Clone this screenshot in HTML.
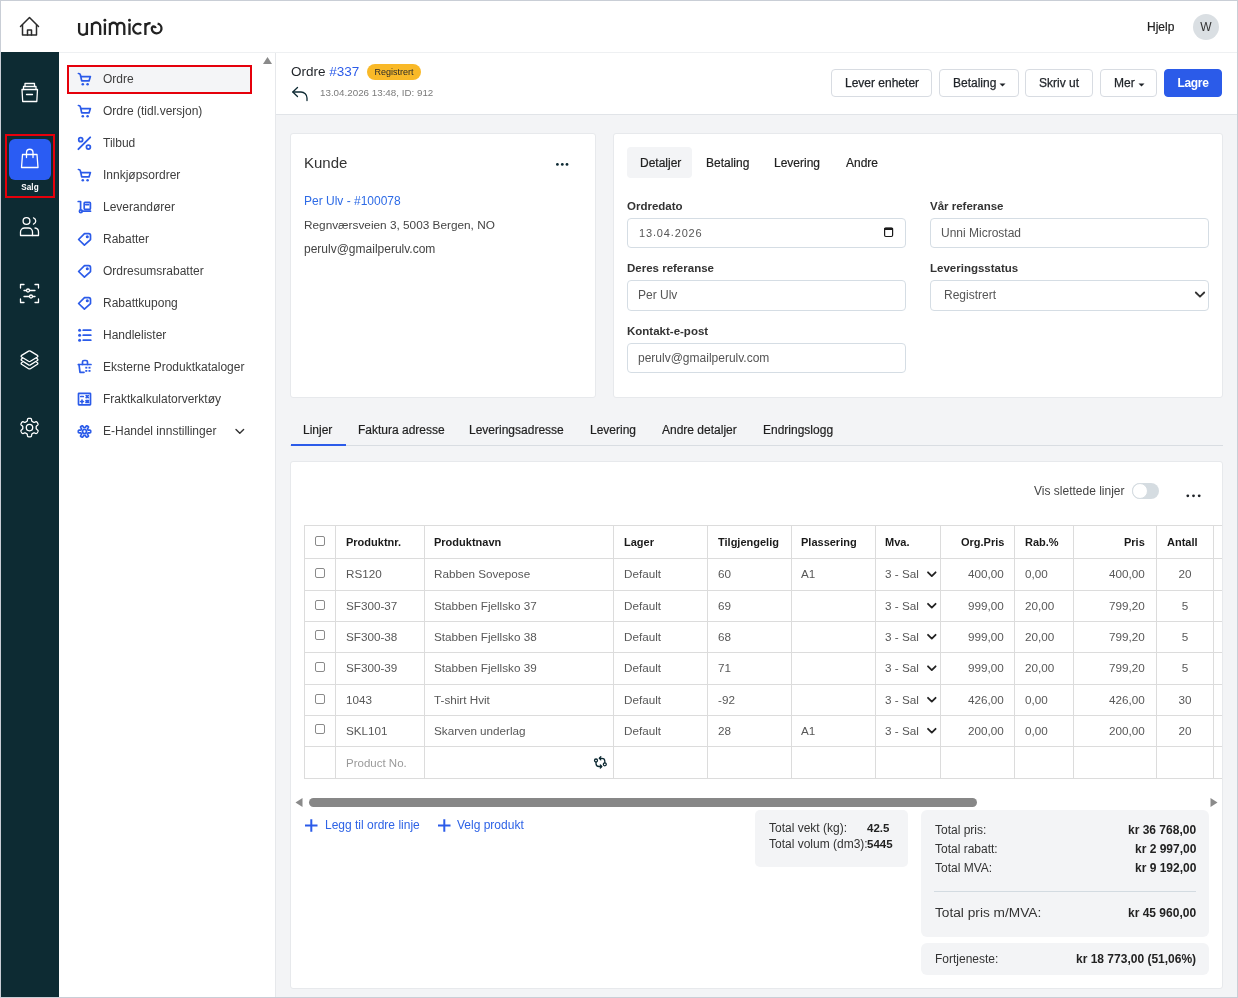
<!DOCTYPE html>
<html><head><meta charset="utf-8">
<style>
*{box-sizing:border-box;margin:0;padding:0}
html,body{width:1238px;height:998px;overflow:hidden;background:#fff}
body{font-family:"Liberation Sans",sans-serif;font-size:12px;color:#222;position:relative}
.a{position:absolute}
.t{position:absolute;line-height:1;white-space:nowrap;will-change:transform}
#frame{position:absolute;left:0;top:0;width:1238px;height:998px;border:1px solid #c9ced6;pointer-events:none;z-index:50}
.btn{position:absolute;top:69px;height:28px;border:1px solid #d8dce2;border-radius:4px;background:#fff}
.card{position:absolute;background:#fff;border:1px solid #e7e9ec;border-radius:3px}
.inp{position:absolute;height:30px;border:1px solid #d5dde4;border-radius:4px;background:#fff}
.cb{position:absolute;width:10px;height:10px;border:1px solid #8a8a8a;border-radius:2px;background:#fff}
svg{position:absolute;left:0;top:0;overflow:visible}
</style></head><body>

<div class="a" style="left:0;top:0;width:1238px;height:53px;background:#fff;border-bottom:1px solid #eceef1"></div>
<div class="a" style="left:0;top:52px;width:59px;height:946px;background:#0d2b33"></div>
<div class="a" style="left:59px;top:52px;width:217px;height:946px;background:#fff;border-right:1px solid #e6e8eb"></div>
<div class="a" style="left:276px;top:52px;width:962px;height:946px;background:#f3f4f6"></div>
<div class="a" style="left:276px;top:52px;width:962px;height:63px;background:#fff;border-bottom:1px solid #e1e4e8"></div>
<div class="a" style="left:59px;top:52px;width:1179px;height:1px;background:#eef0f2"></div>
<div class="t" style="left:1147px;top:21px;font-size:12px;color:#222;font-weight:400;-webkit-text-stroke:0.2px #222">Hjelp</div>
<div class="a" style="left:1193px;top:14px;width:26px;height:26px;border-radius:50%;background:#dadfe3"></div>
<div class="t" style="left:1193.0px;width:26px;text-align:center;top:21px;font-size:12px;color:#333;font-weight:400;">W</div>
<div class="a" style="left:9px;top:139px;width:42px;height:41px;border-radius:6px;background:#2a5cf3"></div>
<div class="t" style="left:10.0px;width:40px;text-align:center;top:184px;font-size:8.2px;color:#fff;font-weight:700;">Salg</div>
<div class="a" style="left:5px;top:134px;width:50px;height:64px;border:2px solid #e5000b"></div>
<div class="a" style="left:67px;top:65px;width:185px;height:29px;background:#f4f5f7;border:2px solid #e5000b"></div>
<div class="t" style="left:103px;top:73px;font-size:12px;color:#3d3d3d;font-weight:400;">Ordre</div>
<div class="t" style="left:103px;top:105px;font-size:12px;color:#3d3d3d;font-weight:400;">Ordre (tidl.versjon)</div>
<div class="t" style="left:103px;top:137px;font-size:12px;color:#3d3d3d;font-weight:400;">Tilbud</div>
<div class="t" style="left:103px;top:169px;font-size:12px;color:#3d3d3d;font-weight:400;">Innkjøpsordrer</div>
<div class="t" style="left:103px;top:201px;font-size:12px;color:#3d3d3d;font-weight:400;">Leverandører</div>
<div class="t" style="left:103px;top:233px;font-size:12px;color:#3d3d3d;font-weight:400;">Rabatter</div>
<div class="t" style="left:103px;top:265px;font-size:12px;color:#3d3d3d;font-weight:400;">Ordresumsrabatter</div>
<div class="t" style="left:103px;top:297px;font-size:12px;color:#3d3d3d;font-weight:400;">Rabattkupong</div>
<div class="t" style="left:103px;top:329px;font-size:12px;color:#3d3d3d;font-weight:400;">Handlelister</div>
<div class="t" style="left:103px;top:361px;font-size:12px;color:#3d3d3d;font-weight:400;">Eksterne Produktkataloger</div>
<div class="t" style="left:103px;top:393px;font-size:12px;color:#3d3d3d;font-weight:400;">Fraktkalkulatorverktøy</div>
<div class="t" style="left:103px;top:425px;font-size:12px;color:#3d3d3d;font-weight:400;">E-Handel innstillinger</div>
<div class="t" style="left:291px;top:65px;font-size:13.5px;color:#1f2328">Ordre <span style="color:#2b5be9">#337</span></div>
<div class="a" style="left:367px;top:64px;width:54px;height:16px;border-radius:8px;background:#f9b928"></div>
<div class="t" style="left:367.0px;width:54px;text-align:center;top:68px;font-size:9px;color:#2a2a2a;font-weight:400;">Registrert</div>
<div class="t" style="left:320px;top:88px;font-size:9.8px;color:#7a7a7a;font-weight:400;">13.04.2026 13:48, ID: 912</div>
<div class="btn" style="left:831px;width:101px"></div>
<div class="btn" style="left:939px;width:80px"></div>
<div class="btn" style="left:1025px;width:68px"></div>
<div class="btn" style="left:1100px;width:57px"></div>
<div class="t" style="left:845px;top:77px;font-size:12px;color:#1f2328;font-weight:400;-webkit-text-stroke:0.25px #1f2328">Lever enheter</div>
<div class="t" style="left:953px;top:77px;font-size:12px;color:#1f2328;font-weight:400;-webkit-text-stroke:0.25px #1f2328">Betaling</div>
<div class="t" style="left:1039px;top:77px;font-size:12px;color:#1f2328;font-weight:400;-webkit-text-stroke:0.25px #1f2328">Skriv ut</div>
<div class="t" style="left:1114px;top:77px;font-size:12px;color:#1f2328;font-weight:400;-webkit-text-stroke:0.25px #1f2328">Mer</div>
<div class="btn" style="left:1164px;width:58px;background:#2b5be9;border-color:#2b5be9"></div>
<div class="t" style="left:1164.0px;width:58px;text-align:center;top:77px;font-size:12px;color:#fff;font-weight:700;letter-spacing:-0.3px">Lagre</div>
<div class="card" style="left:290px;top:133px;width:306px;height:265px"></div>
<div class="card" style="left:613px;top:133px;width:610px;height:265px"></div>
<div class="card" style="left:290px;top:461px;width:933px;height:528px"></div>
<div class="t" style="left:304px;top:155px;font-size:15px;color:#333;font-weight:400;">Kunde</div>
<div class="t" style="left:304px;top:195px;font-size:12px;color:#2e6be6;font-weight:400;">Per Ulv - #100078</div>
<div class="t" style="left:304px;top:220px;font-size:11.8px;color:#444;font-weight:400;">Regnværsveien 3, 5003 Bergen, NO</div>
<div class="t" style="left:304px;top:243px;font-size:12px;color:#444;font-weight:400;">perulv@gmailperulv.com</div>
<div class="a" style="left:627px;top:147px;width:65px;height:31px;border-radius:4px;background:#f3f4f6"></div>
<div class="t" style="left:640px;top:157px;font-size:12px;color:#222;font-weight:400;-webkit-text-stroke:0.2px #222">Detaljer</div>
<div class="t" style="left:706px;top:157px;font-size:12px;color:#222;font-weight:400;-webkit-text-stroke:0.2px #222">Betaling</div>
<div class="t" style="left:774px;top:157px;font-size:12px;color:#222;font-weight:400;-webkit-text-stroke:0.2px #222">Levering</div>
<div class="t" style="left:846px;top:157px;font-size:12px;color:#222;font-weight:400;-webkit-text-stroke:0.2px #222">Andre</div>
<div class="t" style="left:627px;top:201px;font-size:11.5px;color:#333;font-weight:700;">Ordredato</div>
<div class="t" style="left:627px;top:263px;font-size:11.5px;color:#333;font-weight:700;">Deres referanse</div>
<div class="t" style="left:627px;top:326px;font-size:11.5px;color:#333;font-weight:700;">Kontakt-e-post</div>
<div class="t" style="left:930px;top:201px;font-size:11.5px;color:#333;font-weight:700;">Vår referanse</div>
<div class="t" style="left:930px;top:263px;font-size:11.5px;color:#333;font-weight:700;">Leveringsstatus</div>
<div class="inp" style="left:627px;top:218px;width:279px;height:30px"></div>
<div class="inp" style="left:627px;top:280px;width:279px;height:31px"></div>
<div class="inp" style="left:627px;top:343px;width:279px;height:30px"></div>
<div class="inp" style="left:930px;top:218px;width:279px;height:30px"></div>
<div class="inp" style="left:930px;top:280px;width:279px;height:31px"></div>
<div class="t" style="left:638.5px;top:228px;font-size:11px;color:#555;font-weight:400;letter-spacing:0.85px">13<span style="position:relative;top:-1px">.</span>04<span style="position:relative;top:-1px">.</span>2026</div>
<div class="t" style="left:638px;top:289px;font-size:12px;color:#555;font-weight:400;">Per Ulv</div>
<div class="t" style="left:638px;top:352px;font-size:12px;color:#555;font-weight:400;">perulv@gmailperulv.com</div>
<div class="t" style="left:941px;top:227px;font-size:12px;color:#555;font-weight:400;">Unni Microstad</div>
<div class="t" style="left:944px;top:289px;font-size:12px;color:#555;font-weight:400;">Registrert</div>
<div class="a" style="left:290px;top:445px;width:933px;height:1px;background:#d9dde2"></div>
<div class="a" style="left:291px;top:444px;width:55px;height:2px;background:#2b5be9"></div>
<div class="t" style="left:303px;top:424px;font-size:12px;color:#1f1f1f;font-weight:400;-webkit-text-stroke:0.2px #1f1f1f">Linjer</div>
<div class="t" style="left:358px;top:424px;font-size:12px;color:#1f1f1f;font-weight:400;-webkit-text-stroke:0.2px #1f1f1f">Faktura adresse</div>
<div class="t" style="left:469px;top:424px;font-size:12px;color:#1f1f1f;font-weight:400;-webkit-text-stroke:0.2px #1f1f1f">Leveringsadresse</div>
<div class="t" style="left:590px;top:424px;font-size:12px;color:#1f1f1f;font-weight:400;-webkit-text-stroke:0.2px #1f1f1f">Levering</div>
<div class="t" style="left:662px;top:424px;font-size:12px;color:#1f1f1f;font-weight:400;-webkit-text-stroke:0.2px #1f1f1f">Andre detaljer</div>
<div class="t" style="left:763px;top:424px;font-size:12px;color:#1f1f1f;font-weight:400;-webkit-text-stroke:0.2px #1f1f1f">Endringslogg</div>
<div class="t" style="left:1034px;top:485px;font-size:12px;color:#444;font-weight:400;">Vis slettede linjer</div>
<div class="a" style="left:1132px;top:483px;width:27px;height:16px;border-radius:8px;background:#d5dce1"></div>
<div class="a" style="left:1132px;top:483px;width:16px;height:16px;border-radius:50%;background:#fff;border:1px solid #d5dce1"></div>
<div class="a" style="left:304px;top:525px;width:918px;height:254px;background:#fff"></div>
<div class="a" style="left:304px;top:525px;width:918px;height:1px;background:#dcdcdc"></div>
<div class="a" style="left:304px;top:558px;width:918px;height:1px;background:#dcdcdc"></div>
<div class="a" style="left:304px;top:590px;width:918px;height:1px;background:#dcdcdc"></div>
<div class="a" style="left:304px;top:621px;width:918px;height:1px;background:#dcdcdc"></div>
<div class="a" style="left:304px;top:652px;width:918px;height:1px;background:#dcdcdc"></div>
<div class="a" style="left:304px;top:684px;width:918px;height:1px;background:#dcdcdc"></div>
<div class="a" style="left:304px;top:715px;width:918px;height:1px;background:#dcdcdc"></div>
<div class="a" style="left:304px;top:746px;width:918px;height:1px;background:#dcdcdc"></div>
<div class="a" style="left:304px;top:778px;width:918px;height:1px;background:#dcdcdc"></div>
<div class="a" style="left:304px;top:525px;width:1px;height:254px;background:#dcdcdc"></div>
<div class="a" style="left:335px;top:525px;width:1px;height:254px;background:#dcdcdc"></div>
<div class="a" style="left:424px;top:525px;width:1px;height:254px;background:#dcdcdc"></div>
<div class="a" style="left:613px;top:525px;width:1px;height:254px;background:#dcdcdc"></div>
<div class="a" style="left:707px;top:525px;width:1px;height:254px;background:#dcdcdc"></div>
<div class="a" style="left:791px;top:525px;width:1px;height:254px;background:#dcdcdc"></div>
<div class="a" style="left:875px;top:525px;width:1px;height:254px;background:#dcdcdc"></div>
<div class="a" style="left:940px;top:525px;width:1px;height:254px;background:#dcdcdc"></div>
<div class="a" style="left:1014px;top:525px;width:1px;height:254px;background:#dcdcdc"></div>
<div class="a" style="left:1073px;top:525px;width:1px;height:254px;background:#dcdcdc"></div>
<div class="a" style="left:1156px;top:525px;width:1px;height:254px;background:#dcdcdc"></div>
<div class="a" style="left:1213px;top:525px;width:1px;height:254px;background:#dcdcdc"></div>
<div class="t" style="left:346px;top:537px;font-size:11px;color:#1a1a1a;font-weight:700;">Produktnr.</div>
<div class="t" style="left:434px;top:537px;font-size:11px;color:#1a1a1a;font-weight:700;">Produktnavn</div>
<div class="t" style="left:624px;top:537px;font-size:11px;color:#1a1a1a;font-weight:700;">Lager</div>
<div class="t" style="left:718px;top:537px;font-size:11px;color:#1a1a1a;font-weight:700;">Tilgjengelig</div>
<div class="t" style="left:801px;top:537px;font-size:11px;color:#1a1a1a;font-weight:700;">Plassering</div>
<div class="t" style="left:885px;top:537px;font-size:11px;color:#1a1a1a;font-weight:700;">Mva.</div>
<div class="t" style="left:1025px;top:537px;font-size:11px;color:#1a1a1a;font-weight:700;">Rab.%</div>
<div class="t" style="left:1167px;top:537px;font-size:11px;color:#1a1a1a;font-weight:700;">Antall</div>
<div class="t" style="right:234px;top:537px;font-size:11px;color:#1a1a1a;font-weight:700;">Org.Pris</div>
<div class="t" style="right:93px;top:537px;font-size:11px;color:#1a1a1a;font-weight:700;">Pris</div>
<div class="cb" style="left:315px;top:536px"></div>
<div class="cb" style="left:315px;top:568px"></div>
<div class="t" style="left:346px;top:568px;font-size:11.7px;color:#585858;font-weight:400;">RS120</div>
<div class="t" style="left:434px;top:568px;font-size:11.7px;color:#585858;font-weight:400;">Rabben Sovepose</div>
<div class="t" style="left:624px;top:568px;font-size:11.7px;color:#585858;font-weight:400;">Default</div>
<div class="t" style="left:718px;top:568px;font-size:11.7px;color:#585858;font-weight:400;">60</div>
<div class="t" style="left:801px;top:568px;font-size:11.7px;color:#585858;font-weight:400;">A1</div>
<div class="t" style="left:885px;top:568px;font-size:11.7px;color:#585858;font-weight:400;">3 - Sal</div>
<div class="t" style="right:234px;top:568px;font-size:11.7px;color:#585858;font-weight:400;">400,00</div>
<div class="t" style="left:1025px;top:568px;font-size:11.7px;color:#585858;font-weight:400;">0,00</div>
<div class="t" style="right:93px;top:568px;font-size:11.7px;color:#585858;font-weight:400;">400,00</div>
<div class="t" style="left:1164.5px;width:40px;text-align:center;top:568px;font-size:11.7px;color:#585858;font-weight:400;">20</div>
<div class="cb" style="left:315px;top:600px"></div>
<div class="t" style="left:346px;top:600px;font-size:11.7px;color:#585858;font-weight:400;">SF300-37</div>
<div class="t" style="left:434px;top:600px;font-size:11.7px;color:#585858;font-weight:400;">Stabben Fjellsko 37</div>
<div class="t" style="left:624px;top:600px;font-size:11.7px;color:#585858;font-weight:400;">Default</div>
<div class="t" style="left:718px;top:600px;font-size:11.7px;color:#585858;font-weight:400;">69</div>
<div class="t" style="left:885px;top:600px;font-size:11.7px;color:#585858;font-weight:400;">3 - Sal</div>
<div class="t" style="right:234px;top:600px;font-size:11.7px;color:#585858;font-weight:400;">999,00</div>
<div class="t" style="left:1025px;top:600px;font-size:11.7px;color:#585858;font-weight:400;">20,00</div>
<div class="t" style="right:93px;top:600px;font-size:11.7px;color:#585858;font-weight:400;">799,20</div>
<div class="t" style="left:1164.5px;width:40px;text-align:center;top:600px;font-size:11.7px;color:#585858;font-weight:400;">5</div>
<div class="cb" style="left:315px;top:630px"></div>
<div class="t" style="left:346px;top:631px;font-size:11.7px;color:#585858;font-weight:400;">SF300-38</div>
<div class="t" style="left:434px;top:631px;font-size:11.7px;color:#585858;font-weight:400;">Stabben Fjellsko 38</div>
<div class="t" style="left:624px;top:631px;font-size:11.7px;color:#585858;font-weight:400;">Default</div>
<div class="t" style="left:718px;top:631px;font-size:11.7px;color:#585858;font-weight:400;">68</div>
<div class="t" style="left:885px;top:631px;font-size:11.7px;color:#585858;font-weight:400;">3 - Sal</div>
<div class="t" style="right:234px;top:631px;font-size:11.7px;color:#585858;font-weight:400;">999,00</div>
<div class="t" style="left:1025px;top:631px;font-size:11.7px;color:#585858;font-weight:400;">20,00</div>
<div class="t" style="right:93px;top:631px;font-size:11.7px;color:#585858;font-weight:400;">799,20</div>
<div class="t" style="left:1164.5px;width:40px;text-align:center;top:631px;font-size:11.7px;color:#585858;font-weight:400;">5</div>
<div class="cb" style="left:315px;top:662px"></div>
<div class="t" style="left:346px;top:662px;font-size:11.7px;color:#585858;font-weight:400;">SF300-39</div>
<div class="t" style="left:434px;top:662px;font-size:11.7px;color:#585858;font-weight:400;">Stabben Fjellsko 39</div>
<div class="t" style="left:624px;top:662px;font-size:11.7px;color:#585858;font-weight:400;">Default</div>
<div class="t" style="left:718px;top:662px;font-size:11.7px;color:#585858;font-weight:400;">71</div>
<div class="t" style="left:885px;top:662px;font-size:11.7px;color:#585858;font-weight:400;">3 - Sal</div>
<div class="t" style="right:234px;top:662px;font-size:11.7px;color:#585858;font-weight:400;">999,00</div>
<div class="t" style="left:1025px;top:662px;font-size:11.7px;color:#585858;font-weight:400;">20,00</div>
<div class="t" style="right:93px;top:662px;font-size:11.7px;color:#585858;font-weight:400;">799,20</div>
<div class="t" style="left:1164.5px;width:40px;text-align:center;top:662px;font-size:11.7px;color:#585858;font-weight:400;">5</div>
<div class="cb" style="left:315px;top:694px"></div>
<div class="t" style="left:346px;top:694px;font-size:11.7px;color:#585858;font-weight:400;">1043</div>
<div class="t" style="left:434px;top:694px;font-size:11.7px;color:#585858;font-weight:400;">T-shirt Hvit</div>
<div class="t" style="left:624px;top:694px;font-size:11.7px;color:#585858;font-weight:400;">Default</div>
<div class="t" style="left:718px;top:694px;font-size:11.7px;color:#585858;font-weight:400;">-92</div>
<div class="t" style="left:885px;top:694px;font-size:11.7px;color:#585858;font-weight:400;">3 - Sal</div>
<div class="t" style="right:234px;top:694px;font-size:11.7px;color:#585858;font-weight:400;">426,00</div>
<div class="t" style="left:1025px;top:694px;font-size:11.7px;color:#585858;font-weight:400;">0,00</div>
<div class="t" style="right:93px;top:694px;font-size:11.7px;color:#585858;font-weight:400;">426,00</div>
<div class="t" style="left:1164.5px;width:40px;text-align:center;top:694px;font-size:11.7px;color:#585858;font-weight:400;">30</div>
<div class="cb" style="left:315px;top:724px"></div>
<div class="t" style="left:346px;top:725px;font-size:11.7px;color:#585858;font-weight:400;">SKL101</div>
<div class="t" style="left:434px;top:725px;font-size:11.7px;color:#585858;font-weight:400;">Skarven underlag</div>
<div class="t" style="left:624px;top:725px;font-size:11.7px;color:#585858;font-weight:400;">Default</div>
<div class="t" style="left:718px;top:725px;font-size:11.7px;color:#585858;font-weight:400;">28</div>
<div class="t" style="left:801px;top:725px;font-size:11.7px;color:#585858;font-weight:400;">A1</div>
<div class="t" style="left:885px;top:725px;font-size:11.7px;color:#585858;font-weight:400;">3 - Sal</div>
<div class="t" style="right:234px;top:725px;font-size:11.7px;color:#585858;font-weight:400;">200,00</div>
<div class="t" style="left:1025px;top:725px;font-size:11.7px;color:#585858;font-weight:400;">0,00</div>
<div class="t" style="right:93px;top:725px;font-size:11.7px;color:#585858;font-weight:400;">200,00</div>
<div class="t" style="left:1164.5px;width:40px;text-align:center;top:725px;font-size:11.7px;color:#585858;font-weight:400;">20</div>
<div class="t" style="left:346px;top:758px;font-size:11.5px;color:#9a9a9a;font-weight:400;">Product No.</div>
<div class="a" style="left:309px;top:798px;width:668px;height:9px;border-radius:4.5px;background:#878787"></div>
<div class="t" style="left:324.5px;top:819px;font-size:12px;color:#2e63e6;font-weight:400;">Legg til ordre linje</div>
<div class="t" style="left:457px;top:819px;font-size:12px;color:#2e63e6;font-weight:400;">Velg produkt</div>
<div class="a" style="left:755px;top:810px;width:153px;height:57px;border-radius:5px;background:#f3f4f6"></div>
<div class="t" style="left:769px;top:822px;font-size:12px;color:#333;font-weight:400;">Total vekt (kg):</div>
<div class="t" style="left:867px;top:823px;font-size:11.5px;color:#222;font-weight:700;">42.5</div>
<div class="t" style="left:769px;top:838px;font-size:12px;color:#333;font-weight:400;">Total volum (dm3):</div>
<div class="t" style="left:867px;top:839px;font-size:11.5px;color:#222;font-weight:700;">5445</div>
<div class="a" style="left:921px;top:810px;width:288px;height:127px;border-radius:6px;background:#f3f4f6"></div>
<div class="a" style="left:921px;top:943px;width:288px;height:32px;border-radius:6px;background:#f3f4f6"></div>
<div class="a" style="left:934px;top:891px;width:262px;height:1px;background:#d3dbe1"></div>
<div class="t" style="left:935px;top:824px;font-size:12px;color:#333;font-weight:400;">Total pris:</div>
<div class="t" style="left:935px;top:843px;font-size:12px;color:#333;font-weight:400;">Total rabatt:</div>
<div class="t" style="left:935px;top:862px;font-size:12px;color:#333;font-weight:400;">Total MVA:</div>
<div class="t" style="right:42px;top:824px;font-size:12px;color:#222;font-weight:700;">kr 36 768,00</div>
<div class="t" style="right:42px;top:843px;font-size:12px;color:#222;font-weight:700;">kr 2 997,00</div>
<div class="t" style="right:42px;top:862px;font-size:12px;color:#222;font-weight:700;">kr 9 192,00</div>
<div class="t" style="left:935px;top:906px;font-size:13.7px;color:#333;font-weight:400;">Total pris m/MVA:</div>
<div class="t" style="right:42px;top:907px;font-size:12px;color:#222;font-weight:700;">kr 45 960,00</div>
<div class="t" style="left:935px;top:953px;font-size:12px;color:#333;font-weight:400;">Fortjeneste:</div>
<div class="t" style="right:42px;top:953px;font-size:12px;color:#222;font-weight:700;">kr 18 773,00 (51,06%)</div>
<svg width="1238" height="998" viewBox="0 0 1238 998"><g fill="none" stroke="#2b2b2b" stroke-width="1.5" stroke-linejoin="round" stroke-linecap="round"><path d="M20.5 26.5 L29.5 17.5 L38.5 26.5"/><path d="M22.5 25 V35 H36.5 V25"/><path d="M27.5 35 V30 H31.5 V35"/></g><g fill="none" stroke="#222" stroke-width="2.3" stroke-linecap="butt"><path d="M79.1 22.9 V30.9 A3.9 3.9 0 0 0 86.9 30.9 M86.9 22.9 V34.9"/><path d="M92 22.9 V34.9 M92 26.6 A4.1 4.1 0 0 1 100.2 26.6 V34.9"/><path d="M104.9 23.3 V34.9"/><path d="M109.9 22.9 V34.9 M109.9 26.4 A3.65 3.65 0 0 1 117.2 26.4 V34.9 M117.2 26.4 A3.55 3.55 0 0 1 124.3 26.4 V34.9"/><path d="M129.5 23.3 V34.9"/><path d="M141.2 25.2 A4.8 4.8 0 1 0 141.2 32.4"/><path d="M145.4 22.9 V34.9 M145.4 27.2 A4.2 4.2 0 0 1 150.6 23.4"/><path d="M157.6 23.7 A4.85 4.85 0 1 1 151.8 28.6 A1.9 1.9 0 0 1 155.6 28.2"/></g><circle cx="104.9" cy="20.2" r="1.45" fill="#222"/><circle cx="129.5" cy="20.2" r="1.45" fill="#222"/><g fill="none" stroke="#fff" stroke-width="1.3" stroke-linejoin="round" stroke-linecap="round"><path d="M22 89.5 H37.5 L36.8 101.5 H22.7 Z"/><path d="M23.5 89.5 V86.5 H36 V89.5"/><path d="M25 86.5 V83.5 H34.5 V86.5"/><path d="M26.5 94.5 H32.5"/></g><g fill="none" stroke="#fff" stroke-width="1.3" stroke-linejoin="round" stroke-linecap="round"><path d="M22.5 154.5 H37 L38 167.5 H21.5 Z"/><path d="M26.5 157.5 V152.5 A3.2 3.2 0 0 1 33 152.5 V157.5"/></g><g fill="none" stroke="#fff" stroke-width="1.3" stroke-linejoin="round" stroke-linecap="round"><circle cx="26.5" cy="221" r="3.4"/><path d="M20.5 235.5 V232 A4 4 0 0 1 24.5 228 H28.5 A4 4 0 0 1 32.5 232 V235.5 Z"/><path d="M33.5 217.8 A3.4 3.4 0 0 1 33.5 224.2"/><path d="M35 228 A4 4 0 0 1 38.5 232 V235.5 H32.5"/></g><g fill="none" stroke="#fff" stroke-width="1.3" stroke-linejoin="round" stroke-linecap="round"><path d="M20.5 288 V284.5 H24"/><path d="M35 284.5 H38.5 V288"/><path d="M38.5 299 V302.5 H35"/><path d="M24 302.5 H20.5 V299"/><path d="M24 290.5 H35"/><path d="M24 296.5 H35"/><circle cx="28" cy="290.5" r="1.5" fill="#0e2a33"/><circle cx="31" cy="296.5" r="1.5" fill="#0e2a33"/></g><g fill="none" stroke="#fff" stroke-width="1.3" stroke-linejoin="round" stroke-linecap="round"><path d="M28.6 351.1 Q29.5 350.6 30.4 351.1 L37.4 355.4 Q38.3 356.2 37.4 357 L30.4 361.3 Q29.5 361.8 28.6 361.3 L21.6 357 Q20.7 356.2 21.6 355.4 Z"/><path d="M22.3 358.4 L21.6 358.9 Q20.7 359.7 21.6 360.5 L28.6 364.9 Q29.5 365.4 30.4 364.9 L37.4 360.5 Q38.3 359.7 37.4 358.9 L36.7 358.4"/><path d="M22.3 362.2 L21.6 362.7 Q20.7 363.5 21.6 364.3 L28.6 368.7 Q29.5 369.2 30.4 368.7 L37.4 364.3 Q38.3 363.5 37.4 362.7 L36.7 362.2"/></g><g fill="none" stroke="#fff" stroke-width="1.3" stroke-linejoin="round" stroke-linecap="round"><path d="M36.20 427.60 L36.20 427.83 L36.19 428.07 L36.19 428.30 L36.21 428.54 L36.28 428.80 L36.49 429.09 L36.94 429.45 L37.51 429.90 L37.92 430.34 L38.07 430.72 L38.06 431.06 L37.97 431.37 L37.85 431.67 L37.71 431.97 L37.55 432.25 L37.39 432.53 L37.20 432.80 L37.00 433.05 L36.77 433.28 L36.48 433.46 L36.08 433.52 L35.50 433.39 L34.82 433.11 L34.28 432.91 L33.92 432.87 L33.67 432.94 L33.45 433.04 L33.25 433.16 L33.05 433.28 L32.85 433.40 L32.65 433.52 L32.44 433.63 L32.24 433.75 L32.04 433.88 L31.85 434.07 L31.71 434.40 L31.61 434.97 L31.52 435.69 L31.34 436.26 L31.08 436.58 L30.78 436.74 L30.47 436.82 L30.15 436.87 L29.82 436.89 L29.50 436.90 L29.18 436.89 L28.85 436.87 L28.53 436.82 L28.22 436.74 L27.92 436.58 L27.66 436.26 L27.48 435.69 L27.39 434.97 L27.29 434.40 L27.15 434.07 L26.96 433.88 L26.76 433.75 L26.56 433.63 L26.35 433.52 L26.15 433.40 L25.95 433.28 L25.75 433.16 L25.55 433.04 L25.33 432.94 L25.08 432.87 L24.72 432.91 L24.18 433.11 L23.50 433.39 L22.92 433.52 L22.52 433.46 L22.23 433.28 L22.00 433.05 L21.80 432.80 L21.61 432.53 L21.45 432.25 L21.29 431.97 L21.15 431.67 L21.03 431.37 L20.94 431.06 L20.93 430.72 L21.08 430.34 L21.49 429.90 L22.06 429.45 L22.51 429.09 L22.72 428.80 L22.79 428.54 L22.81 428.30 L22.81 428.07 L22.80 427.83 L22.80 427.60 L22.80 427.37 L22.81 427.13 L22.81 426.90 L22.79 426.66 L22.72 426.40 L22.51 426.11 L22.06 425.75 L21.49 425.30 L21.08 424.86 L20.93 424.48 L20.94 424.14 L21.03 423.83 L21.15 423.53 L21.29 423.23 L21.45 422.95 L21.61 422.67 L21.80 422.40 L22.00 422.15 L22.23 421.92 L22.52 421.74 L22.92 421.68 L23.50 421.81 L24.18 422.09 L24.72 422.29 L25.08 422.33 L25.33 422.26 L25.55 422.16 L25.75 422.04 L25.95 421.92 L26.15 421.80 L26.35 421.68 L26.56 421.57 L26.76 421.45 L26.96 421.32 L27.15 421.13 L27.29 420.80 L27.39 420.23 L27.48 419.51 L27.66 418.94 L27.92 418.62 L28.22 418.46 L28.53 418.38 L28.85 418.33 L29.18 418.31 L29.50 418.30 L29.82 418.31 L30.15 418.33 L30.47 418.38 L30.78 418.46 L31.08 418.62 L31.34 418.94 L31.52 419.51 L31.61 420.23 L31.71 420.80 L31.85 421.13 L32.04 421.32 L32.24 421.45 L32.44 421.57 L32.65 421.68 L32.85 421.80 L33.05 421.92 L33.25 422.04 L33.45 422.16 L33.67 422.26 L33.92 422.33 L34.28 422.29 L34.82 422.09 L35.50 421.81 L36.08 421.68 L36.48 421.74 L36.77 421.92 L37.00 422.15 L37.20 422.40 L37.39 422.67 L37.55 422.95 L37.71 423.23 L37.85 423.53 L37.97 423.83 L38.06 424.14 L38.07 424.48 L37.92 424.86 L37.51 425.30 L36.94 425.75 L36.49 426.11 L36.28 426.40 L36.21 426.66 L36.19 426.90 L36.19 427.13 L36.20 427.37 L36.20 427.60 Z"/><circle cx="29.5" cy="427.6" r="3.2"/></g><g fill="none" stroke="#2b5be9" stroke-width="1.7" stroke-linejoin="round" stroke-linecap="round"><path d="M78.4 73.5 Q80.1 73.4 80.5 75.2 L81.7 80.9 H89 L90.4 76.6 H80.6"/></g><circle cx="82.8" cy="84.3" r="1.3" fill="#2b5be9"/><circle cx="87.6" cy="84.3" r="1.3" fill="#2b5be9"/><g fill="none" stroke="#2b5be9" stroke-width="1.7" stroke-linejoin="round" stroke-linecap="round"><path d="M78.4 105.5 Q80.1 105.4 80.5 107.2 L81.7 112.9 H89 L90.4 108.6 H80.6"/></g><circle cx="82.8" cy="116.3" r="1.3" fill="#2b5be9"/><circle cx="87.6" cy="116.3" r="1.3" fill="#2b5be9"/><g fill="none" stroke="#2b5be9" stroke-width="1.7" stroke-linejoin="round" stroke-linecap="round"><path d="M78.4 169.5 Q80.1 169.4 80.5 171.2 L81.7 176.9 H89 L90.4 172.6 H80.6"/></g><circle cx="82.8" cy="180.3" r="1.3" fill="#2b5be9"/><circle cx="87.6" cy="180.3" r="1.3" fill="#2b5be9"/><g fill="none" stroke="#2b5be9" stroke-width="1.7" stroke-linejoin="round" stroke-linecap="round"><circle cx="80.7" cy="139.7" r="2"/><circle cx="88.4" cy="147.1" r="2"/><path d="M90.2 137.3 L78.4 149.2" stroke-width="1.9"/></g><g fill="none" stroke="#2b5be9" stroke-width="1.7" stroke-linejoin="round" stroke-linecap="round" stroke-width="1.3"><path d="M78.2 201.5 H80.6 V209.8"/><path d="M82.2 211.2 H90.5"/><circle cx="80.8" cy="211.3" r="1.4"/><rect x="84.2" y="202.4" width="6.2" height="6.9" rx="0.8"/><path d="M85.8 204.6 H88.6"/></g><g fill="none" stroke="#2b5be9" stroke-width="1.7" stroke-linejoin="round" stroke-linecap="round"><path d="M78.6 239.5 L84.5 233.6 H88.8 Q90.5 233.6 90.5 235.4 V239.6 L84.4 245.2 Z"/><circle cx="87.3" cy="236.7" r="0.7" fill="#2b5be9"/></g><g fill="none" stroke="#2b5be9" stroke-width="1.7" stroke-linejoin="round" stroke-linecap="round"><path d="M78.6 271.5 L84.5 265.6 H88.8 Q90.5 265.6 90.5 267.4 V271.6 L84.4 277.2 Z"/><circle cx="87.3" cy="268.7" r="0.7" fill="#2b5be9"/></g><g fill="none" stroke="#2b5be9" stroke-width="1.7" stroke-linejoin="round" stroke-linecap="round"><path d="M78.6 303.5 L84.5 297.6 H88.8 Q90.5 297.6 90.5 299.4 V303.6 L84.4 309.2 Z"/><circle cx="87.3" cy="300.7" r="0.7" fill="#2b5be9"/></g><g fill="#2b5be9"><circle cx="79.6" cy="330.2" r="1.5"/><circle cx="79.6" cy="335.2" r="1.5"/><circle cx="79.6" cy="340.2" r="1.5"/></g><g fill="none" stroke="#2b5be9" stroke-width="1.7" stroke-linejoin="round" stroke-linecap="round" stroke-width="1.8" stroke-linecap="butt"><path d="M83.2 330.2 H90.8 M83.2 335.2 H90.8 M83.2 340.2 H90.8"/></g><g fill="none" stroke="#2b5be9" stroke-width="1.7" stroke-linejoin="round" stroke-linecap="round" stroke-width="1.3"><path d="M78.3 364.5 H91"/><path d="M79 364.5 L80 372.3 H84"/><path d="M82.5 364.5 V362 Q82.5 360.5 84 360.5 H86 Q87.5 360.5 87.5 362 V364.5"/></g><g fill="#2b5be9"><rect x="85.3" y="366.8" width="2" height="1.8"/><rect x="88.5" y="366.8" width="2" height="1.8"/><rect x="85.3" y="370" width="2" height="1.8"/><rect x="88.5" y="370" width="2" height="1.8"/></g><g fill="none" stroke="#2b5be9" stroke-width="1.7" stroke-linejoin="round" stroke-linecap="round" stroke-width="1.3"><rect x="78.5" y="393.3" width="12" height="11.5" rx="0.5"/><path d="M80.8 396.5 H83.3 M86.2 395.6 L88.2 397.6 M88.2 395.6 L86.2 397.6 M86 400.6 H88.5 M86 402.4 H88.5 M80.6 401.5 H83.4 M82 400.1 V402.9"/></g><g fill="none" stroke="#2b5be9" stroke-width="1.7" stroke-linejoin="round" stroke-linecap="round" stroke-width="1.6"><path d="M90.70 431.50 L90.70 431.72 L90.68 431.93 L90.65 432.15 L90.60 432.36 L90.50 432.56 L90.25 432.72 L89.71 432.80 L88.95 432.78 L88.42 432.77 L88.17 432.84 L88.06 432.94 L87.98 433.05 L87.92 433.17 L87.86 433.28 L87.79 433.40 L87.72 433.51 L87.65 433.63 L87.58 433.74 L87.52 433.86 L87.49 434.01 L87.56 434.26 L87.83 434.72 L88.23 435.36 L88.43 435.87 L88.42 436.17 L88.29 436.36 L88.14 436.51 L87.96 436.64 L87.79 436.76 L87.60 436.87 L87.41 436.97 L87.22 437.07 L87.02 437.15 L86.81 437.21 L86.58 437.22 L86.32 437.09 L85.98 436.66 L85.62 436.00 L85.36 435.53 L85.18 435.35 L85.03 435.30 L84.90 435.29 L84.77 435.29 L84.63 435.30 L84.50 435.30 L84.37 435.30 L84.23 435.29 L84.10 435.29 L83.97 435.30 L83.82 435.35 L83.64 435.53 L83.38 436.00 L83.02 436.66 L82.68 437.09 L82.42 437.22 L82.19 437.21 L81.98 437.15 L81.78 437.07 L81.59 436.97 L81.40 436.87 L81.21 436.76 L81.04 436.64 L80.86 436.51 L80.71 436.36 L80.58 436.17 L80.57 435.87 L80.77 435.36 L81.17 434.72 L81.44 434.26 L81.51 434.01 L81.48 433.86 L81.42 433.74 L81.35 433.63 L81.28 433.51 L81.21 433.40 L81.14 433.28 L81.08 433.17 L81.02 433.05 L80.94 432.94 L80.83 432.84 L80.58 432.77 L80.05 432.78 L79.29 432.80 L78.75 432.72 L78.50 432.56 L78.40 432.36 L78.35 432.15 L78.32 431.93 L78.30 431.72 L78.30 431.50 L78.30 431.28 L78.32 431.07 L78.35 430.85 L78.40 430.64 L78.50 430.44 L78.75 430.28 L79.29 430.20 L80.05 430.22 L80.58 430.23 L80.83 430.16 L80.94 430.06 L81.02 429.95 L81.08 429.83 L81.14 429.72 L81.21 429.60 L81.28 429.49 L81.35 429.37 L81.42 429.26 L81.48 429.14 L81.51 428.99 L81.44 428.74 L81.17 428.28 L80.77 427.64 L80.57 427.13 L80.58 426.83 L80.71 426.64 L80.86 426.49 L81.04 426.36 L81.21 426.24 L81.40 426.13 L81.59 426.03 L81.78 425.93 L81.98 425.85 L82.19 425.79 L82.42 425.78 L82.68 425.91 L83.02 426.34 L83.38 427.00 L83.64 427.47 L83.82 427.65 L83.97 427.70 L84.10 427.71 L84.23 427.71 L84.37 427.70 L84.50 427.70 L84.63 427.70 L84.77 427.71 L84.90 427.71 L85.03 427.70 L85.18 427.65 L85.36 427.47 L85.62 427.00 L85.98 426.34 L86.32 425.91 L86.58 425.78 L86.81 425.79 L87.02 425.85 L87.22 425.93 L87.41 426.03 L87.60 426.13 L87.79 426.24 L87.96 426.36 L88.14 426.49 L88.29 426.64 L88.42 426.83 L88.43 427.13 L88.23 427.64 L87.83 428.28 L87.56 428.74 L87.49 428.99 L87.52 429.14 L87.58 429.26 L87.65 429.37 L87.72 429.49 L87.79 429.60 L87.86 429.72 L87.92 429.83 L87.98 429.95 L88.06 430.06 L88.17 430.16 L88.42 430.23 L88.95 430.22 L89.71 430.20 L90.25 430.28 L90.50 430.44 L90.60 430.64 L90.65 430.85 L90.68 431.07 L90.70 431.28 L90.70 431.50 Z"/><circle cx="84.5" cy="431.5" r="2"/></g><path d="M236 429.5 L239.8 433.3 L243.6 429.5" fill="none" stroke="#333" stroke-width="1.4" stroke-linecap="round" stroke-linejoin="round"/><path d="M263 64 L267.5 57 L272 64 Z" fill="#8a8a8a"/><g fill="none" stroke="#0e2a33" stroke-width="1.3" stroke-linecap="round" stroke-linejoin="round"><path d="M297.5 87.5 L292.8 92 L297.5 96.5"/><path d="M293 92 H301 A6 6 0 0 1 307 98 V100.5"/></g><path d="M999.5 83.5 H1005.5 L1002.5 86.5 Z" fill="#1f2328"/><path d="M1138.5 83.5 H1144.5 L1141.5 86.5 Z" fill="#1f2328"/><g fill="#0e2a33"><circle cx="557.4" cy="164.4" r="1.4"/><circle cx="562.3" cy="164.4" r="1.4"/><circle cx="567" cy="164.4" r="1.4"/></g><g fill="none" stroke="#1a1a1a" stroke-width="1.2"><rect x="884.6" y="228.2" width="8" height="8.3" rx="1.2"/></g><rect x="884" y="227.8" width="9.2" height="2.3" rx="1" fill="#1a1a1a"/><path d="M1195.8 292.5 L1200 296.7 L1204.2 292.5" fill="none" stroke="#333" stroke-width="1.8" stroke-linecap="round" stroke-linejoin="round"/><g fill="#1f2328"><circle cx="1187.8" cy="495.8" r="1.4"/><circle cx="1193.5" cy="495.8" r="1.4"/><circle cx="1199.2" cy="495.8" r="1.4"/></g><path d="M928 572.3 L931.8 576.1 L935.6 572.3" fill="none" stroke="#222" stroke-width="1.8" stroke-linecap="round" stroke-linejoin="round"/><path d="M928 603.8 L931.8 607.6 L935.6 603.8" fill="none" stroke="#222" stroke-width="1.8" stroke-linecap="round" stroke-linejoin="round"/><path d="M928 634.8 L931.8 638.6 L935.6 634.8" fill="none" stroke="#222" stroke-width="1.8" stroke-linecap="round" stroke-linejoin="round"/><path d="M928 666.3 L931.8 670.1 L935.6 666.3" fill="none" stroke="#222" stroke-width="1.8" stroke-linecap="round" stroke-linejoin="round"/><path d="M928 697.8 L931.8 701.6 L935.6 697.8" fill="none" stroke="#222" stroke-width="1.8" stroke-linecap="round" stroke-linejoin="round"/><path d="M928 728.8 L931.8 732.6 L935.6 728.8" fill="none" stroke="#222" stroke-width="1.8" stroke-linecap="round" stroke-linejoin="round"/><g fill="none" stroke="#0e2a33" stroke-width="1.3" stroke-linecap="round" stroke-linejoin="round"><circle cx="596" cy="760.5" r="1.5"/><circle cx="604.8" cy="764.3" r="1.5"/><path d="M596 762 V763.5 Q596 766.5 599 766.5 H601.5"/><path d="M600.3 765 L601.8 766.5 L600.3 768"/><path d="M604.8 762.8 V761 Q604.8 758.3 601.8 758.3 H599.5"/><path d="M600.8 756.8 L599.3 758.3 L600.8 759.8"/></g><path d="M295.5 802.5 L302.5 798 V807 Z" fill="#8a8a8a"/><path d="M1217.5 802.5 L1210.5 798 V807 Z" fill="#8a8a8a"/><g stroke="#2b5be9" stroke-width="2" stroke-linecap="butt"><path d="M305 825.5 H317.5 M311.3 819.3 V831.7"/><path d="M438 825.5 H450.5 M444.3 819.3 V831.7"/></g></svg>
<div id="frame"></div>
</body></html>
